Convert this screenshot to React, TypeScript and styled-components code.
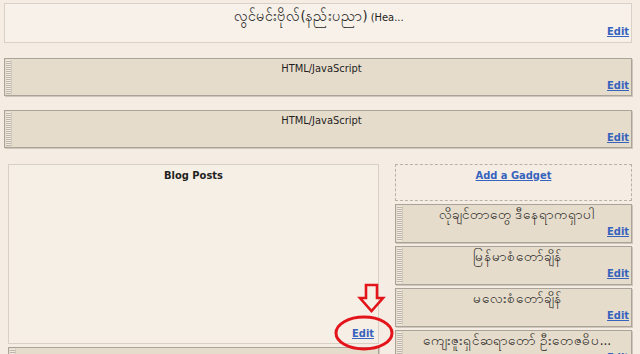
import styled, { createGlobalStyle } from 'styled-components';

const GlobalStyle = createGlobalStyle`
  html, body {
    margin: 0;
    padding: 0;
    background: #f5ede4;
    overflow: hidden;
  }
  body {
    font-family: "DejaVu Sans Condensed", "DejaVu Sans", "Noto Sans", sans-serif;
    font-stretch: condensed;
    font-size: 11px;
    color: #222;
  }
`

const Page = styled.div`
  width: 640px;
  height: 354px;
  overflow: hidden;
  padding: 3px 8px 0 4px;
  box-sizing: border-box;
  display: flex;
  flex-direction: column;
  gap: 14px;
`

const HeaderBox = styled.div`
  border: 1px solid #d9d1c7;
  background: #f7f1e9;
  padding: 6px 2px 4px 4px;
  margin-bottom: 1px;
  display: flex;
  flex-direction: column;
  gap: 2px;
`

const Widget = styled.div<{ $h: number }>`
  display: flex;
  flex-shrink: 0;
  border: 1px solid #a9a39a;
  box-shadow: 1px 1px 0 #cfc7bb;
  background: #e6dccb;
  height: ${p => p.$h}px;
  box-sizing: border-box;
`

const Grip = styled.div`
  width: 5px;
  margin: 1px 0 1px 1px;
  flex-shrink: 0;
  background-image: repeating-linear-gradient(
    to bottom,
    #f1ebe1 0px,
    #f1ebe1 1px,
    #bdb5a9 1px,
    #bdb5a9 2px
  );
  border-right: 1px solid #d3cabc;
`

const WidgetBody = styled.div`
  flex: 1;
  display: flex;
  flex-direction: column;
  padding: 3px 2px 2px 2px;
  gap: 4px;
`

const Title = styled.div<{ $bold?: boolean; $my?: boolean }>`
  text-align: center;
  height: 13px;
  line-height: 13px;
  font-size: ${p => (p.$my ? 13.5 : 11)}px;
  font-weight: ${p => (p.$bold ? 700 : 400)};
  white-space: nowrap;
  color: #1f1f1f;
`

const MyText = styled.span`
  font-size: 14.5px;
`

const EditLink = styled.a`
  align-self: flex-end;
  line-height: 13px;
  font-weight: 700;
  color: #3563bd;
  text-decoration: underline;
  cursor: pointer;
`

const Columns = styled.div`
  display: flex;
  gap: 16px;
  padding-left: 4px;
  margin-top: 2px;
`

const MainCol = styled.div`
  width: 371px;
  display: flex;
  flex-direction: column;
  gap: 3px;
`

const SideCol = styled.div`
  flex: 1;
  display: flex;
  flex-direction: column;
  gap: 3px;
`

const PostsBox = styled.div`
  position: relative;
  height: 180px;
  flex-shrink: 0;
  box-sizing: border-box;
  border: 1px solid #d8d0c5;
  background: #f6efe6;
  display: flex;
  flex-direction: column;
  padding: 4px 4px 3px 4px;
`

const PostsEdit = styled(EditLink)`
  margin-top: auto;
`

const Marker = styled.svg`
  position: absolute;
  left: 311px;
  top: 117px;
  overflow: visible;
  pointer-events: none;
`

const GadgetSlot = styled.div`
  height: 37px;
  flex-shrink: 0;
  box-sizing: border-box;
  border: 1px dashed #b9b1a6;
  display: flex;
  justify-content: center;
  padding-top: 4px;
`

const AddLink = styled.a`
  font-weight: 700;
  color: #3563bd;
  text-decoration: underline;
  line-height: 13px;
  height: 13px;
  cursor: pointer;
`

type Item = { title: string; bold?: boolean; my?: boolean }

const sideItems: Item[] = [
  { title: 'လိုချင်တာတွေ ဒီနေရာကရှာပါ', my: true },
  { title: 'မြန်မာစံတော်ချိန်', my: true },
  { title: 'မလေးစံတော်ချိန်', my: true },
  { title: 'ကျေးဇူးရှင်ဆရာတော် ဦးတေဇဓိပ...', my: true },
]

function WidgetCard({ title, bold, my, h, empty }: Item & { h: number; empty?: boolean }) {
  return (
    <Widget $h={h}>
      <Grip />
      {!empty && (
        <WidgetBody>
          <Title $bold={bold} $my={my}>{title}</Title>
          <EditLink>Edit</EditLink>
        </WidgetBody>
      )}
    </Widget>
  )
}

export default function App() {
  return (
    <>
      <GlobalStyle />
      <Page>
        <HeaderBox>
          <Title>
            <MyText>လွင်မင်းဗိုလ်(နည်းပညာ)</MyText> (Hea...
          </Title>
          <EditLink>Edit</EditLink>
        </HeaderBox>
        <WidgetCard title="HTML/JavaScript" h={38} />
        <WidgetCard title="HTML/JavaScript" h={38} />
        <Columns>
          <MainCol>
            <PostsBox>
              <Title $bold>Blog Posts</Title>
              <PostsEdit>Edit</PostsEdit>
              <Marker width="80" height="70" viewBox="0 0 80 70">
                <path
                  d="M46 3 H57 V16 H63 L51.5 29 L40 16 H46 Z"
                  fill="none"
                  stroke="#e3151b"
                  strokeWidth="2.6"
                  strokeLinejoin="miter"
                />
                <ellipse cx="44" cy="51" rx="28" ry="16" fill="none" stroke="#e3151b" strokeWidth="3" />
              </Marker>
            </PostsBox>
            <WidgetCard title="" h={39} empty />
          </MainCol>
          <SideCol>
            <GadgetSlot>
              <AddLink>Add a Gadget</AddLink>
            </GadgetSlot>
            {sideItems.map((it, i) => (
              <WidgetCard key={i} title={it.title} my={it.my} h={39} />
            ))}
          </SideCol>
        </Columns>
      </Page>
    </>
  )
}
